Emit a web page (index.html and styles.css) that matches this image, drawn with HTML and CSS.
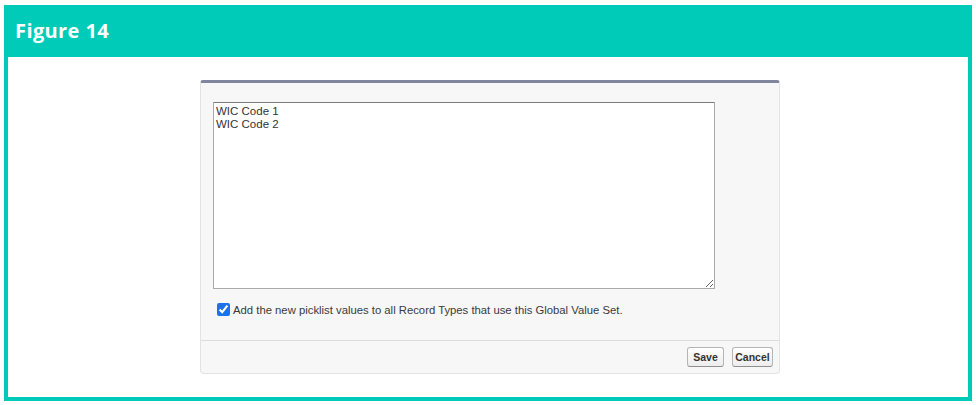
FILE: index.html
```html
<!DOCTYPE html>
<html lang="en">
<head>
  <meta charset="UTF-8">
  <meta name="viewport" content="width=device-width, initial-scale=1.0">
  <title>Figure 14</title>
  <link rel="stylesheet" href="styles.css">
</head>
<body>
  <div class="figure">
    <div class="figure-header">Figure 14</div>
    <div class="figure-body">
      <div class="panel">
        <div class="panel-main">
          <textarea class="values" spellcheck="false">WIC Code 1
WIC Code 2</textarea>
          <label class="check-row">
            <input type="checkbox" checked>
            <span>Add the new picklist values to all Record Types that use this Global Value Set.</span>
          </label>
        </div>
        <div class="panel-footer">
          <button type="button" class="btn btn-save">Save</button>
          <button type="button" class="btn btn-cancel">Cancel</button>
        </div>
      </div>
    </div>
  </div>
</body>
</html>
```

FILE: styles.css
```css
body {
  margin: 0;
  padding: 0;
  background: white;
  font-family: "Liberation Sans", Arial, sans-serif;
}

.figure {
  width: 968px;
  margin: 5px 0 0 4px;
  box-sizing: border-box;
}

.figure-header {
  height: 52px;
  background-color: #00cbb8;
  color: white;
  font-family: "Open Sans", sans-serif;
  font-weight: 700;
  font-size: 20px;
  letter-spacing: 0.4px;
  line-height: 52px;
  padding-left: 11px;
  box-sizing: border-box;
}

.figure-body {
  height: 344px;
  border: 4px solid #00cbb8;
  border-top: none;
  box-sizing: border-box;
  padding: 23px 0 0 192px;
}

.panel {
  width: 580px;
  height: 294px;
  box-sizing: border-box;
  background-color: #f7f7f7;
  border: 1px solid #e3e3e3;
  border-top: 3px solid #7f869e;
  border-radius: 3px 3px 4px 4px;
  display: flex;
  flex-direction: column;
}

.panel-main {
  flex: 1;
  padding: 19px 0 0 12px;
}

.values {
  display: block;
  width: 502px;
  height: 187px;
  box-sizing: border-box;
  margin: 0;
  padding: 2px 2px;
  border: 1px solid #a9a9a9;
  border-top-color: #7a7a7a;
  border-radius: 1px;
  background: white;
  color: #333;
  font-family: "Liberation Sans", Arial, sans-serif;
  font-size: 11.5px;
  line-height: 13px;
  resize: both;
  outline: none;
}

.check-row {
  display: flex;
  align-items: center;
  gap: 3px;
  margin: 14px 0 0 4px;
  font-size: 11.3px;
  color: #3a3a3a;
}

.check-row input {
  width: 13px;
  height: 13px;
  margin: 0;
  accent-color: #1a73e8;
}

.panel-footer {
  height: 33px;
  border-top: 1px solid #dcdcdc;
  box-sizing: border-box;
  display: flex;
  justify-content: flex-end;
  align-items: center;
  gap: 8px;
  padding-right: 6px;
}

.btn {
  height: 20px;
  padding: 0;
  border: 1px solid #b5b5b5;
  border-bottom-color: #8f8f8f;
  border-radius: 3px;
  background: linear-gradient(#ffffff, #ededed);
  color: #333;
  font-family: "Liberation Sans", Arial, sans-serif;
  font-size: 10.5px;
  font-weight: 700;
  cursor: pointer;
}

.btn-save {
  width: 37px;
}

.btn-cancel {
  width: 41px;
}
```
